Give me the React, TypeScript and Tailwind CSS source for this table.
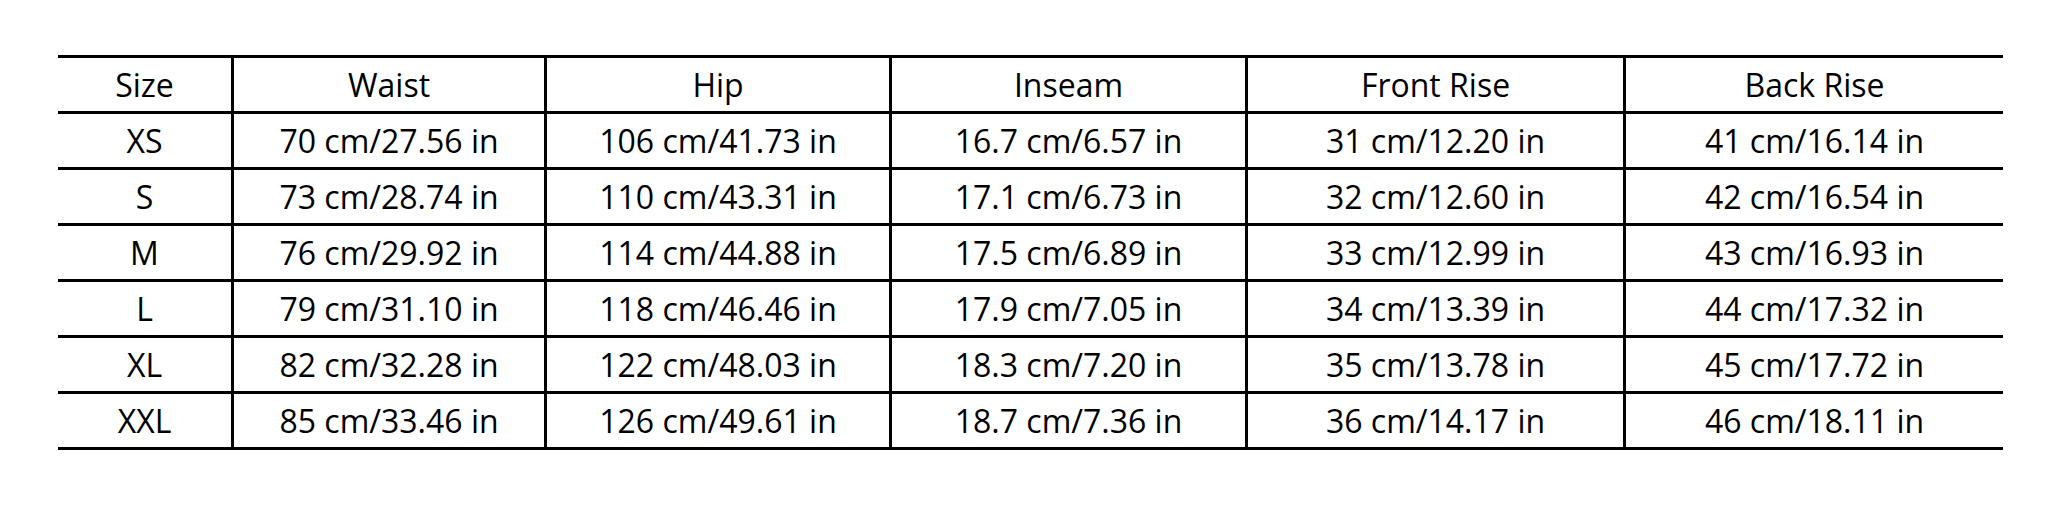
const headers = ['Size', 'Waist', 'Hip', 'Inseam', 'Front Rise', 'Back Rise'];

const rows = [
  ['XS', '70 cm/27.56 in', '106 cm/41.73 in', '16.7 cm/6.57 in', '31 cm/12.20 in', '41 cm/16.14 in'],
  ['S', '73 cm/28.74 in', '110 cm/43.31 in', '17.1 cm/6.73 in', '32 cm/12.60 in', '42 cm/16.54 in'],
  ['M', '76 cm/29.92 in', '114 cm/44.88 in', '17.5 cm/6.89 in', '33 cm/12.99 in', '43 cm/16.93 in'],
  ['L', '79 cm/31.10 in', '118 cm/46.46 in', '17.9 cm/7.05 in', '34 cm/13.39 in', '44 cm/17.32 in'],
  ['XL', '82 cm/32.28 in', '122 cm/48.03 in', '18.3 cm/7.20 in', '35 cm/13.78 in', '45 cm/17.72 in'],
  ['XXL', '85 cm/33.46 in', '126 cm/49.61 in', '18.7 cm/7.36 in', '36 cm/14.17 in', '46 cm/18.11 in'],
];

function Row({ cells }: { cells: string[] }) {
  return (
    <div className="grid grid-cols-[176px_313px_345px_356px_378px_377px] border-b-[3px] border-black">
      {cells.map((c, i) => (
        <div
          key={i}
          className={`flex h-[53px] items-center justify-center ${i < cells.length - 1 ? 'border-r-[3px] border-black' : ''}`}
        >
          {c}
        </div>
      ))}
    </div>
  );
}

export default function App() {
  return (
    <div
      className="h-[515px] w-[2048px] bg-white pl-[58px] pt-[55px] text-[32px] leading-none text-black"
      style={{ fontFamily: '"Open Sans", "Noto Sans", sans-serif' }}
    >
      <div className="w-[1945px] border-t-[3px] border-black">
        <Row cells={headers} />
        {rows.map((r) => (
          <Row key={r[0]} cells={r} />
        ))}
      </div>
    </div>
  );
}
